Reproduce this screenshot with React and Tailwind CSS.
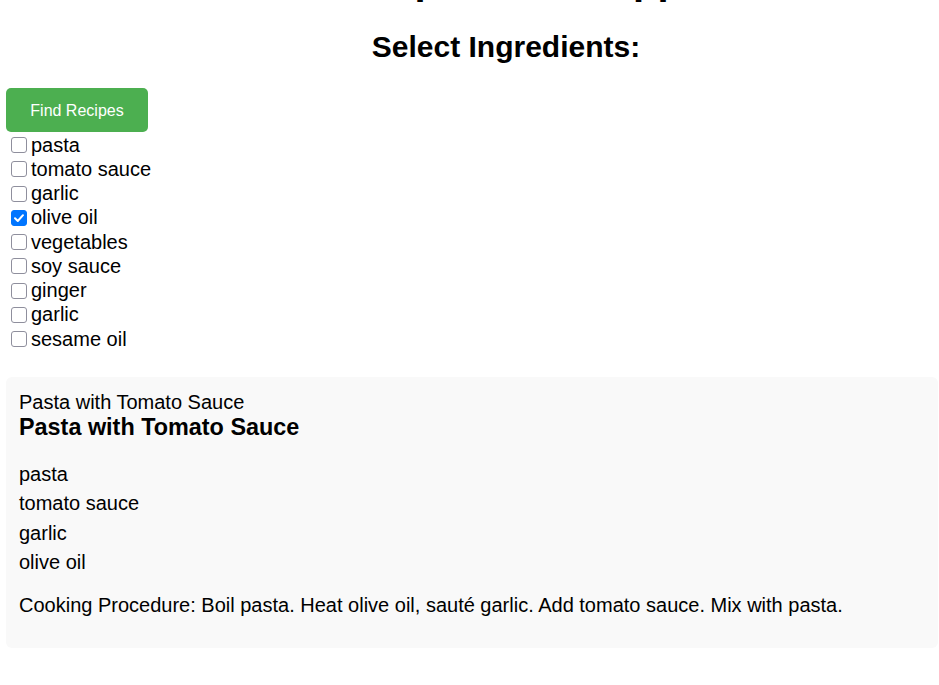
import React, { useState } from 'react';

const initialIngredients = [
  { name: 'pasta', checked: false },
  { name: 'tomato sauce', checked: false },
  { name: 'garlic', checked: false },
  { name: 'olive oil', checked: true },
  { name: 'vegetables', checked: false },
  { name: 'soy sauce', checked: false },
  { name: 'ginger', checked: false },
  { name: 'garlic', checked: false },
  { name: 'sesame oil', checked: false },
];

const recipe = {
  name: 'Pasta with Tomato Sauce',
  ingredients: ['pasta', 'tomato sauce', 'garlic', 'olive oil'],
  procedure: 'Boil pasta. Heat olive oil, sauté garlic. Add tomato sauce. Mix with pasta.',
};

function Checkbox({ checked, onToggle }) {
  return (
    <span
      onClick={onToggle}
      className={`w-[16px] h-[16px] ml-[5px] mr-[4px] shrink-0 rounded-[3px] flex items-center justify-center ${
        checked ? 'bg-[#0075ff] border border-[#0075ff]' : 'bg-white border-[1.5px] border-[#8f8f9d]'
      }`}
    >
      {checked && (
        <svg width="12" height="12" viewBox="0 0 12 12" fill="none">
          <path d="M2 6.3 L4.8 9 L10 3.2" stroke="white" strokeWidth="2" strokeLinecap="round" strokeLinejoin="round" />
        </svg>
      )}
    </span>
  );
}

export default function App() {
  const [items, setItems] = useState(initialIngredients);

  const toggle = (idx) => {
    setItems(items.map((it, i) => (i === idx ? { ...it, checked: !it.checked } : it)));
  };

  return (
    <div className="w-full h-[685px] overflow-hidden bg-white text-black font-['Liberation_Sans',Arial,sans-serif]">
      <div className="w-[1000px] px-[6px] box-content">
        <h1 className="-mt-[43px] mb-[27px] text-[40px] leading-[46px] font-bold text-center">
          Recipe Finder App
        </h1>
        <h2 className="text-[30px] leading-[34.5px] font-bold text-center mb-[23px]">
          Select Ingredients:
        </h2>

        <button className="h-[44px] pt-[3px] px-[24.3px] bg-[#4caf50] text-white text-[16px] rounded-[5px]">
          Find Recipes
        </button>

        {/* ingredient checklist */}
        <div className="flex flex-col mt-[1.5px]">
          {items.map((item, i) => (
            <label key={i} className="h-[24.25px] flex items-center text-[20px] leading-[23px]">
              <Checkbox checked={item.checked} onToggle={() => toggle(i)} />
              <span>{item.name}</span>
            </label>
          ))}
        </div>

        <div className="w-[932px] mt-[25.5px] bg-[#f9f9f9] rounded-[6px] px-[13px] pt-[14px] pb-[31px]">
          <div className="text-[20px] leading-[23px]">{recipe.name}</div>
          <h3 className="text-[23.4px] leading-[27px] font-bold mb-[22.4px]">{recipe.name}</h3>
          <ul className="flex flex-col gap-[6.3px]">
            {recipe.ingredients.map((ing, i) => (
              <li key={i} className="text-[20px] leading-[23px]">{ing}</li>
            ))}
          </ul>
          <p className="mt-[20px] text-[20px] leading-[23px]">Cooking Procedure: {recipe.procedure}</p>
        </div>
      </div>
    </div>
  );
}
